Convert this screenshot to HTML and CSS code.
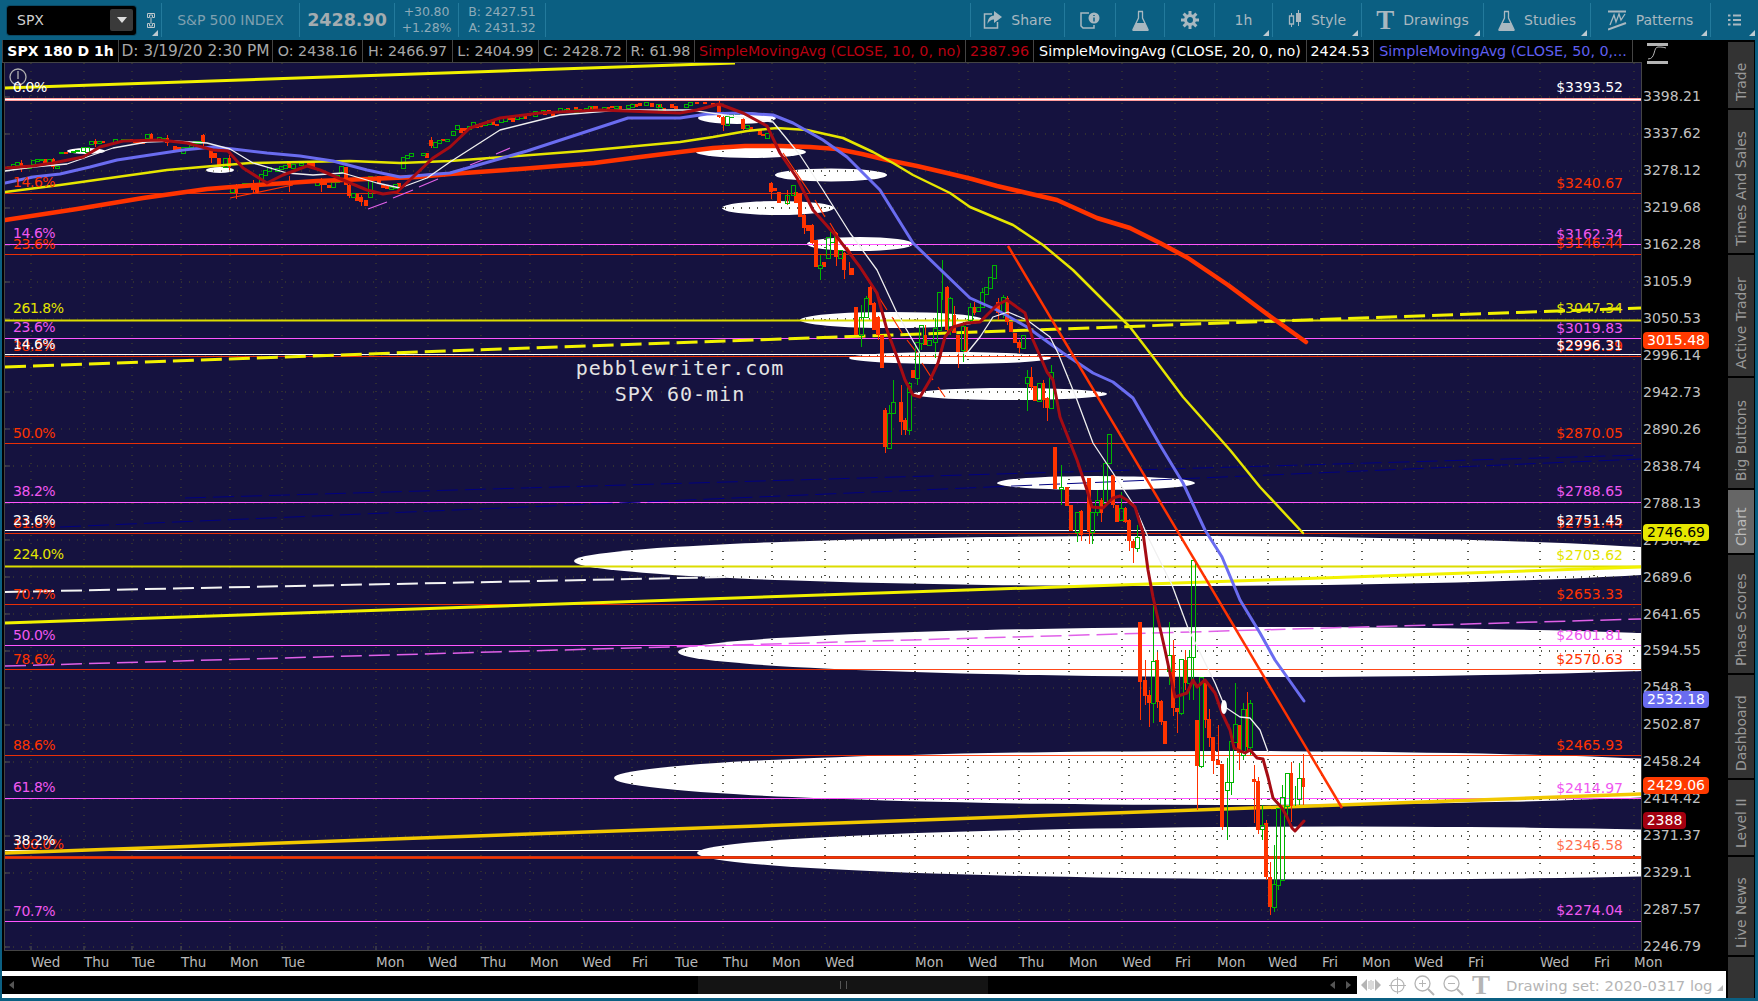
FILE: index.html
```html
<!DOCTYPE html>
<html lang="en">
<head>
<meta charset="utf-8">
<title>SPX chart</title>
<link rel="stylesheet" href="styles.css">
</head>
<body>
<div class="app">
  <header class="topbar">
    <div class="cell cell-symbol has-menu">
      <div class="symbol-box"><span class="symbol-name">SPX</span><span class="symbol-drop"><span class="drop-arrow"></span></span></div>
      <svg class="link-icon" width="10" height="17" viewBox="0 0 10 17"><path d="M1.5 1.5h7v4h-2v-2.500h-3v2.500h-2zM1.500 15.500h7v-4h-2v2.500h-3v-2.500h-2z" fill="none" stroke="#bcc6cb"/><path d="M5 5v7" stroke="#bcc6cb"/></svg>
    </div>
    <div class="cell dim">S&amp;P 500 INDEX</div>
    <div class="cell price">2428.90</div>
    <div class="cell stack dim"><span>+30.80</span><span>+1.28%</span></div>
    <div class="cell stack dim"><span>B: 2427.51</span><span>A: 2431.32</span></div>
    <div class="cell cell-empty"></div>
    <div class="cell tool"><svg width="19" height="18" viewBox="0 0 19 18"><path d="M9 3H1.500v14h13v-6" fill="none" stroke="#a9b8c0" stroke-width="1.500"/><path d="M11 0l8 6-8 6V8.500c-3 0-5 1.500-6.500 4.500 0-5 2.500-8 6.500-8.500z" fill="#a9b8c0"/></svg><span>Share</span></div>
    <div class="cell tool"><svg width="20" height="17" viewBox="0 0 20 17"><path d="M9 1H1v13l2 2h11v-3" fill="none" stroke="#a9b8c0" stroke-width="1.500"/><circle cx="14" cy="6" r="5.500" fill="#a9b8c0"/><path d="M14 3v1M14 5.500v4" stroke="#0b5f82" stroke-width="1.500"/></svg></div>
    <div class="cell tool"><svg width="17" height="21" viewBox="0 0 17 21"><path d="M6 1.500h5M6.500 1.500v6.500L1 19.500c-.3.800.2 1 1 1h13c.8 0 1.300-.2 1-1L10.500 8V1.500" fill="none" stroke="#a9b8c0" stroke-width="1.300"/><path d="M4 13h9l3 7H1z" fill="#a9b8c0"/></svg></div>
    <div class="cell tool"><svg width="18" height="18" viewBox="0 0 18 18"><circle cx="9" cy="9" r="4.500" fill="none" stroke="#a9b8c0" stroke-width="3"/><path d="M9 0v4M9 14v4M0 9h4M14 9h4M2.600 2.600l2.800 2.800M12.600 12.600l2.800 2.800M15.400 2.600l-2.800 2.800M5.400 12.600l-2.800 2.800" stroke="#a9b8c0" stroke-width="3"/></svg></div>
    <div class="cell tool has-menu"><span>1h</span></div>
    <div class="cell tool has-menu"><svg width="14" height="20" viewBox="0 0 14 20"><path d="M3.500 3v14M10.500 0v16" stroke="#a9b8c0"/><path d="M1.500 6h4v8h-4z" fill="#0b5f82" stroke="#a9b8c0" stroke-width="1.300"/><path d="M8 3h5v9H8z" fill="#a9b8c0"/></svg><span>Style</span></div>
    <div class="cell tool has-menu"><span class="t-glyph">T</span><span>Drawings</span></div>
    <div class="cell tool has-menu"><svg width="17" height="21" viewBox="0 0 17 21"><path d="M6 1.500h5M6.500 1.500v6.500L1 19.500c-.3.800.2 1 1 1h13c.8 0 1.300-.2 1-1L10.500 8V1.500" fill="none" stroke="#a9b8c0" stroke-width="1.300"/><path d="M4 13h9l3 7H1z" fill="#a9b8c0"/></svg><span>Studies</span></div>
    <div class="cell tool has-menu"><svg width="19" height="21" viewBox="0 0 19 21"><path d="M0 1.500h18M0 19.500L18 13" stroke="#a9b8c0" stroke-width="2"/><path d="M2 15L6 5l2 7 3-8 2 6 4-6" fill="none" stroke="#a9b8c0" stroke-width="1.300"/></svg><span>Patterns</span></div>
    <div class="cell tool has-menu"><svg width="13" height="12" viewBox="0 0 13 12"><path d="M0 1.500h2.500M0 6h2.500M0 10.500h2.500M5 1.500h8M5 6h8M5 10.500h8" stroke="#a9b8c0" stroke-width="2"/></svg></div>
  </header>

  <div class="workspace">
    <div class="chart-area">
      <div class="chart-top">
        <div class="legend">
          <span class="lg lg-title">SPX 180 D 1h</span>
          <span class="lg lg-date">D: 3/19/20 2:30 PM</span>
          <span class="lg">O: 2438.16</span>
          <span class="lg">H: 2466.97</span>
          <span class="lg">L: 2404.99</span>
          <span class="lg">C: 2428.72</span>
          <span class="lg">R: 61.98</span>
          <span class="lg c-red">SimpleMovingAvg (CLOSE, 10, 0, no)</span>
          <span class="lg c-red">2387.96</span>
          <span class="lg c-white">SimpleMovingAvg (CLOSE, 20, 0, no)</span>
          <span class="lg c-white">2424.53</span>
          <span class="lg c-blue">SimpleMovingAvg (CLOSE, 50, 0,...</span>
          <span class="lg"></span>
        </div>
        <div class="axis-head"><svg width="22" height="21" viewBox="0 0 22 21"><path d="M0 1.500h21M0 19.500h21" stroke="#b5b5b5" stroke-width="3"/><path d="M1 16c8 0 5-12 10-12 3 0 5 0 8 1" fill="none" stroke="#b5b5b5"/></svg></div>
      </div>

      <div class="plot-row">
        <div class="plot">
          <svg class="chart" width="1636" height="887" viewBox="5 63 1636 887">
            <defs>
              <clipPath id="ell">
                <ellipse cx="737" cy="118" rx="39" ry="6"/><ellipse cx="751" cy="152" rx="55" ry="6"/><ellipse cx="831" cy="175" rx="56" ry="6.500"/><ellipse cx="778" cy="208" rx="56" ry="7"/><ellipse cx="860" cy="244" rx="53" ry="7"/><ellipse cx="892" cy="320" rx="92" ry="8"/><ellipse cx="950" cy="358" rx="101" ry="6"/><ellipse cx="1010" cy="394" rx="97" ry="6"/><ellipse cx="1096" cy="483" rx="99" ry="7"/><ellipse cx="1157" cy="561" rx="583" ry="25"/><ellipse cx="1262" cy="652" rx="584" ry="25"/><ellipse cx="1222" cy="778" rx="608" ry="27"/><ellipse cx="1343" cy="853" rx="646" ry="26.500"/>
              </clipPath>
              <g id="gridlines">
                <path d="M5 97H1641M5 134H1641M5 171H1641M5 208H1641M5 245H1641M5 282H1641M5 319H1641M5 356H1641M5 392H1641M5 429H1641M5 466H1641M5 503H1641M5 540H1641M5 577H1641M5 614H1641M5 651H1641M5 688H1641M5 725H1641M5 762H1641M5 799H1641M5 836H1641M5 873H1641M5 910H1641M5 947H1641M31 63V950M84 63V950M132 63V950M181 63V950M230 63V950M282 63V950M376 63V950M428 63V950M481 63V950M530 63V950M582 63V950M632 63V950M675 63V950M723 63V950M772 63V950M825 63V950M915 63V950M968 63V950M1019 63V950M1069 63V950M1122 63V950M1175 63V950M1217 63V950M1268 63V950M1322 63V950M1362 63V950M1414 63V950M1468 63V950M1540 63V950M1594 63V950M1634 63V950"/>
              </g>
            </defs>
            <rect x="5" y="63" width="1636" height="887" class="bg"/>
            <g class="blobs">
              <ellipse cx="86" cy="151" rx="19" ry="3"/><ellipse cx="220" cy="170" rx="14" ry="3"/>
              <ellipse cx="737" cy="118" rx="39" ry="6"/><ellipse cx="751" cy="152" rx="55" ry="6"/><ellipse cx="831" cy="175" rx="56" ry="6.500"/><ellipse cx="778" cy="208" rx="56" ry="7"/><ellipse cx="860" cy="244" rx="53" ry="7"/><ellipse cx="892" cy="320" rx="92" ry="8"/><ellipse cx="950" cy="358" rx="101" ry="6"/><ellipse cx="1010" cy="394" rx="97" ry="6"/><ellipse cx="1096" cy="483" rx="99" ry="7"/><ellipse cx="1157" cy="561" rx="583" ry="25"/><ellipse cx="1262" cy="652" rx="584" ry="25"/><ellipse cx="1222" cy="778" rx="608" ry="27"/><ellipse cx="1343" cy="853" rx="646" ry="26.500"/>
            </g>
            <use href="#gridlines" class="grid"/>
            <g clip-path="url(#ell)"><use href="#gridlines" class="grid-on-white"/></g>
            <path class="ticks" d="M5 97h5M5 134h5M5 171h5M5 208h5M5 245h5M5 282h5M5 319h5M5 356h5M5 392h5M5 429h5M5 466h5M5 503h5M5 540h5M5 577h5M5 614h5M5 651h5M5 688h5M5 725h5M5 762h5M5 799h5M5 836h5M5 873h5M5 910h5M5 947h5M31 950v-4M84 950v-4M132 950v-4M181 950v-4M230 950v-4M282 950v-4M376 950v-4M428 950v-4M481 950v-4"/>

            <g class="levels">
              <path class="lv-pink" d="M5 99.500H1641"/><path class="lv-white" d="M5 99.500H1641"/>
              <path class="lv-red" d="M5 193.500H1641M5 254.500H1641M5 356.500H1641M5 443.500H1641M5 533.500H1641M5 604.500H1641M5 669.500H1641M5 755.500H1641"/>
              <path class="lv-mag" d="M5 244.500H1641M5 338.500H1641M5 502.500H1641M5 645.500H1641M5 798.500H1641M5 921.500H1641"/>
              <path class="lv-yel" d="M5 320.500H1641M5 566.500H1641"/>
              <path class="lv-white" d="M5 354.500H1641M5 530.500H1641M5 850.500H1641"/>
              <path class="lv-thick" d="M5 857.500H1641"/><path class="lv-red" d="M5 857.500H1641"/>
            </g>

            <g class="trend">
              <path class="t-yellow" d="M5 88L735 63"/>
              <path class="t-yellow-dash" d="M5 367L1641 308"/>
              <path class="t-white-dash" d="M5 592L730 577"/>
              <path class="t-yellow" d="M5 623L1641 567"/>
              <path class="t-mag-dash" d="M5 666L1641 619"/>
              <path class="t-navy-dash" d="M60 527L1641 459M185 498L1641 455"/>
              <path class="t-gold" d="M5 853L1641 794"/>
              <path class="t-red-thin" d="M230 198L293 185M783 153L810 193M815 200L825 217M830 223L840 240M847 247L887 310M892 317L902 333M907 340L917 353M922 363L933 380M938 387L945 397"/>
              <path class="t-mag-thin" d="M368 209L387 202M393 198L413 190M419 187L438 179M444 176L464 168M470 165L490 157M496 154L510 148"/>
            </g>

            <g class="candles">
              <path class="wick-r" d="M21 160V172M53 158V169M95 139V147M151 133V141M167 135V146M203 134V146M211 146V163M229 155V170M236 184V199M253 180V193M289 176V192M321 178V192M349 183V198M361 195V206M431 137V148M719 101V118M723 116V131M743 117V130M771 182V199M787 190V205M804 214V234M812 224V244M836 232V266M844 252V279M849 262V275M870 286V305M874 302V330M878 316V340M925 325V345M947 286V332M954 306V333M958 335V368M974 302V315M998 298V320M1007 296V325M1019 340V353M885 408V453M901 385V435M905 418V435M1031 367V390M1043 380V408M1047 397V421M1081 510V541M1089 478V544M1101 498V522M1113 474V508M1125 507V523M1129 519V551M1133 540V563M1140 622V720M1145 660V705M1149 690V727M1157 652V708M1161 700V725M1173 640V716M1177 708V733M1185 650V690M1197 720V810M1205 682V728M1209 709V747M1213 737V774M1218 725V765M1222 764V830M1239 725V770M1247 692V750M1254 765V823M1258 777V834M1266 820V880M1270 862V915M1291 762V822M1303 754V805"/>
              <path class="body-r" d="M21 163V167M25 165V169M45 159V163M53 159V167M62 152V154M66 152V154M95 141V144M103 141V143M131 139V142M135 141V143M139 142V144M143 142V144M151 134V139M155 139V140M167 138V143M175 146V150M179 147V152M203 135V143M211 149V158M215 153V158M219 158V167M229 158V167M236 186V193M253 183V190M257 185V192M289 163V168M309 162V167M313 162V169M321 181V185M325 181V185M329 185V188M346 167V185M349 185V196M357 194V201M361 197V202M366 200V206M379 176V183M383 185V188M387 186V189M399 183V188M427 153V158M431 140V146M443 139V141M461 128V133M465 128V131M477 124V128M481 123V127M493 121V125M497 124V126M509 117V120M513 118V122M525 116V119M529 113V116M545 111V115M549 110V113M553 112V116M568 108V112M576 107V110M580 109V112M592 106V109M596 106V110M608 107V110M612 106V108M620 106V109M636 104V107M640 103V106M652 103V107M660 104V108M664 108V112M672 104V108M676 106V109M697 102V104M705 102V104M713 103V106M719 103V117M723 117V125M743 119V129M751 127V130M760 130V135M763 134V136M771 183V192M775 188V191M779 192V203M796 192V203M800 193V217M804 215V228M808 225V231M812 225V243M816 240V267M824 262V267M836 233V257M844 253V270M852 268V275M856 307V335M870 287V305M874 303V330M878 317V335M882 335V368M913 370V378M925 335V345M947 287V330M954 315V333M958 335V352M966 327V352M974 307V313M998 302V313M1007 298V322M1011 322V332M1015 333V343M1019 342V348M885 410V447M901 402V422M905 420V430M1031 377V387M1035 386V401M1043 383V400M1047 398V408M1055 447V489M1067 487V506M1071 505V531M1081 511V535M1089 478V532M1101 500V513M1113 475V505M1117 505V522M1125 508V522M1129 520V541M1133 541V548M1140 622V682M1145 680V696M1149 695V703M1157 660V702M1161 701V722M1165 721V744M1173 655V708M1177 708V712M1185 660V683M1197 720V766M1205 682V720M1209 719V738M1213 737V761M1218 760V765M1222 764V827M1239 725V753M1247 709V747M1254 779V782M1258 781V830M1266 823V877M1270 877V907M1291 773V806M1303 778V787"/>
              <path class="wick-g" d="M727 112V116M820 255V265M820 268V280M861 305V317M861 335V347M866 296V298M917 378V385M921 343V350M935 318V328M935 342V358M942 260V300M950 297V298M950 330V335M963 322V326M963 350V362M970 303V307M970 320V322M982 288V292M1003 295V297M1003 313V318M1027 370V377M1027 383V411M1051 365V372M893 380V402M889 405V413M909 382V383M909 430V435M1061 465V487M1061 489V505M1077 532V542M1092 532V544M1097 490V500M1097 512V516M1105 462V463M1105 503V505M1121 492V508M1137 525V537M1137 548V552M1153 598V661M1153 703V723M1169 622V655M1169 671V685M1181 713V715M1189 650V657M1189 683V700M1193 657V700M1201 766V768M1227 758V782M1227 790V840M1231 735V741M1231 782V795M1235 683V724M1243 703V709M1243 755V760M1250 700V703M1250 747V755M1262 805V825M1262 829V840M1274 845V884M1274 907V912M1278 885V890M1282 785V797M1287 806V820M1295 786V806M1299 763V778M1299 799V805"/>
              <path class="body-g" d="M7 166h4v2h-4zM11 164h4v2h-4zM15 162h4v3h-4zM27 167h4v1h-4zM31 160h4v4h-4zM35 159h4v2h-4zM39 159h4v1h-4zM47 159h4v3h-4zM55 166h4v2h-4zM59 152h4v1h-4zM71 151h4v1h-4zM75 150h4v1h-4zM81 147h4v4h-4zM85 147h4v5h-4zM89 141h4v3h-4zM97 141h4v2h-4zM113 139h4v3h-4zM121 139h4v2h-4zM125 139h4v1h-4zM145 134h4v4h-4zM157 137h4v3h-4zM161 138h4v2h-4zM181 147h4v6h-4zM185 147h4v2h-4zM189 145h4v2h-4zM193 141h4v2h-4zM197 141h4v2h-4zM223 158h4v9h-4zM230 186h4v6h-4zM238 184h4v3h-4zM242 183h4v4h-4zM246 183h4v2h-4zM259 174h4v10h-4zM263 170h4v5h-4zM267 167h4v4h-4zM275 168h4v3h-4zM279 166h4v3h-4zM283 165h4v3h-4zM291 164h4v4h-4zM299 163h4v2h-4zM315 180h4v5h-4zM331 182h4v5h-4zM335 175h4v7h-4zM339 166h4v6h-4zM351 193h4v4h-4zM368 176h4v21h-4zM389 187h4v2h-4zM393 184h4v4h-4zM401 157h4v11h-4zM405 155h4v3h-4zM409 153h4v3h-4zM421 153h4v2h-4zM433 142h4v5h-4zM437 140h4v3h-4zM445 139h4v2h-4zM451 131h4v4h-4zM455 125h4v4h-4zM467 126h4v3h-4zM471 122h4v4h-4zM483 122h4v3h-4zM487 120h4v4h-4zM499 118h4v4h-4zM503 117h4v4h-4zM515 115h4v4h-4zM519 114h4v4h-4zM533 111h4v5h-4zM541 110h4v3h-4zM558 108h4v4h-4zM564 109h4v3h-4zM574 109h4v3h-4zM584 108h4v3h-4zM588 106h4v3h-4zM602 107h4v3h-4zM614 106h4v2h-4zM626 105h4v3h-4zM630 104h4v3h-4zM644 102h4v3h-4zM656 104h4v3h-4zM658 107h4v3h-4zM684 104h4v3h-4zM688 102h4v3h-4zM725 116h4v9h-4zM729 114h4v3h-4zM735 112h4v2h-4zM745 125h4v3h-4zM765 133h4v5h-4zM785 195h4v8h-4zM791 185h4v10h-4zM818 265h4v3h-4zM826 237h4v21h-4zM830 232h4v10h-4zM838 250h4v8h-4zM859 317h4v18h-4zM864 298h4v19h-4zM907 386h4v6h-4zM915 342h4v36h-4zM919 325h4v18h-4zM927 340h4v5h-4zM933 328h4v14h-4zM937 292h4v38h-4zM948 298h4v32h-4zM961 326h4v24h-4zM968 307h4v13h-4zM976 307h4v4h-4zM980 292h4v15h-4zM984 287h4v7h-4zM988 277h4v11h-4zM992 265h4v13h-4zM1001 297h4v16h-4zM1021 335h4v13h-4zM887 413h4v35h-4zM891 402h4v11h-4zM907 383h4v47h-4zM1025 377h4v6h-4zM1037 383h4v18h-4zM1049 372h4v36h-4zM1059 487h4v2h-4zM1075 512h4v20h-4zM1090 512h4v20h-4zM1095 500h4v12h-4zM1103 463h4v40h-4zM1107 434h4v29h-4zM1119 508h4v12h-4zM1135 537h4v11h-4zM1151 661h4v42h-4zM1167 655h4v16h-4zM1179 659h4v54h-4zM1187 657h4v26h-4zM1191 560h4v97h-4zM1199 677h4v89h-4zM1225 782h4v8h-4zM1229 741h4v41h-4zM1233 724h4v18h-4zM1241 709h4v46h-4zM1248 703h4v44h-4zM1260 825h4v4h-4zM1272 884h4v23h-4zM1276 808h4v77h-4zM1280 797h4v83h-4zM1285 773h4v33h-4zM1297 778h4v21h-4z"/>
            </g>

            <g class="mas">
              <polyline class="ma-red" points="5,220 77,209 143,198 207,189 257,185 317,181 367,179 417,177 450,174 520,169 594,163 640,157 680,152 713,148 745,146 780,146 810,147 837,149 862,154 887,160 917,166 947,173 972,179 997,186 1027,193 1057,200 1077,209 1097,218 1130,228 1160,243 1188,258 1228,285 1267,314 1306,342"/>
              <polyline class="ma-yellow" points="5,192 60,185 117,177 167,170 213,166 250,163 300,162 350,161 400,163 450,161 583,151 680,142 713,137 747,131 777,128 807,130 843,138 873,152 893,163 913,175 950,193 970,207 1013,225 1043,245 1073,270 1103,300 1130,327 1153,357 1183,397 1230,450 1260,487 1303,533"/>
              <polyline class="ma-blue" points="5,183 33,177 60,174 90,167 117,160 150,155 183,150 213,147 233,149 267,153 300,156 333,161 367,170 400,177 450,173 527,151 628,118 680,118 707,114 740,113 773,115 793,123 823,140 847,157 880,190 913,243 943,272 970,298 997,310 1027,327 1063,353 1093,373 1113,382 1133,398 1160,445 1183,483 1205,530 1222,557 1240,600 1260,633 1275,660 1304,701"/>
              <polyline class="ma-white" points="5,171 33,167 67,164 87,157 113,148 147,142 173,141 207,143 230,149 253,163 287,173 313,175 343,173 360,178 377,183 400,188 427,178 450,162 500,130 560,115 620,110 690,110 773,122 800,155 823,190 850,233 877,270 897,313 920,353 967,353 980,337 993,317 1008,312 1027,320 1050,337 1058,353 1077,400 1093,443 1113,473 1135,507 1148,537 1172,585 1188,628 1215,683 1225,707 1240,717 1250,718 1260,730 1268,752"/>
              <polyline class="ma-dark" points="5,168 33,166 53,163 83,157 100,147 123,141 160,140 187,143 213,150 228,151 243,168 267,183 283,175 307,166 320,170 350,183 367,190 383,194 397,192 413,177 433,158 450,147 470,128 500,118 540,113 600,110 680,113 697,110 719,104 743,113 767,126 780,153 797,178 813,210 837,237 860,267 877,293 887,330 897,357 905,380 913,395 920,397 930,380 938,363 945,337 953,327 967,323 980,322 997,305 1007,300 1025,313 1033,340 1047,372 1053,380 1060,417 1077,460 1087,490 1092,507 1103,508 1113,498 1120,496 1127,500 1135,507 1143,533 1148,570 1153,597 1165,650 1175,697 1187,693 1193,680 1197,687 1205,680 1215,693 1222,713 1230,730 1234,748 1245,753 1250,750 1257,758 1263,759 1268,777 1273,798 1282,808 1287,817 1292,828 1295,831 1304,821"/>
              <ellipse class="blob-dot" cx="1224" cy="707" rx="3" ry="7"/>
              <path class="t-red" d="M1008 246L1342 808"/>
            </g>

            <g class="info-mark"><circle cx="18" cy="77" r="8"/><path d="M18 71v8M18 81v2"/></g>

            <g class="lb-left">
              <text class="c-wh" x="13" y="92">0.0%</text>
              <text class="c-rd" x="13" y="187">14.6%</text>
              <text class="c-mg" x="13" y="238">14.6%</text>
              <text class="c-rd" x="13" y="249">23.6%</text>
              <text class="c-yl" x="13" y="313">261.8%</text>
              <text class="c-mg" x="13" y="332">23.6%</text>
              <text class="c-rd" x="13" y="351">38.2%</text>
              <text class="c-wh" x="13" y="349">14.6%</text>
              <text class="c-rd" x="13" y="438">50.0%</text>
              <text class="c-mg" x="13" y="496">38.2%</text>
              <text class="c-rd" x="13" y="528">61.8%</text>
              <text class="c-wh" x="13" y="525">23.6%</text>
              <text class="c-yl" x="13" y="559">224.0%</text>
              <text class="c-rd" x="13" y="599">70.7%</text>
              <text class="c-mg" x="13" y="640">50.0%</text>
              <text class="c-rd" x="13" y="664">78.6%</text>
              <text class="c-rd" x="13" y="750">88.6%</text>
              <text class="c-mg" x="13" y="792">61.8%</text>
              <text class="c-rd" x="13" y="849">100.0%</text>
              <text class="c-wh" x="13" y="845">38.2%</text>
              <text class="c-mg" x="13" y="916">70.7%</text>
            </g>
            <g class="lb-right">
              <text class="c-wh" x="1623" y="92">$3393.52</text>
              <text class="c-rd" x="1623" y="188">$3240.67</text>
              <text class="c-mg" x="1623" y="239">$3162.34</text>
              <text class="c-rd" x="1623" y="248">$3146.44</text>
              <text class="c-yl" x="1623" y="313">$3047.34</text>
              <text class="c-mg" x="1623" y="333">$3019.83</text>
              <text class="c-rd" x="1623" y="351">$2996.39</text>
              <text class="c-wh" x="1623" y="350">$2996.31</text>
              <text class="c-rd" x="1623" y="438">$2870.05</text>
              <text class="c-mg" x="1623" y="496">$2788.65</text>
              <text class="c-rd" x="1623" y="528">$2751.44</text>
              <text class="c-wh" x="1623" y="525">$2751.45</text>
              <text class="c-yl" x="1623" y="560">$2703.62</text>
              <text class="c-rd" x="1623" y="599">$2653.33</text>
              <text class="c-mg" x="1623" y="640">$2601.81</text>
              <text class="c-rd" x="1623" y="664">$2570.63</text>
              <text class="c-rd" x="1623" y="750">$2465.93</text>
              <text class="c-mg" x="1623" y="793">$2414.97</text>
              <text class="c-rd faint" x="1623" y="850">$2346.58</text>
              <text class="c-mg" x="1623" y="915">$2274.04</text>
            </g>
            <text class="note" x="680" y="375">pebblewriter.com</text>
            <text class="note" x="680" y="401">SPX 60-min</text>
          </svg>
        </div>
        <div class="price-axis">
          <span>3398.21</span><span>3337.62</span><span>3278.12</span><span>3219.68</span><span>3162.28</span><span>3105.9</span><span>3050.53</span><span>2996.14</span><span>2942.73</span><span>2890.26</span><span>2838.74</span><span>2788.13</span><span>2738.42</span><span>2689.6</span><span>2641.65</span><span>2594.55</span><span>2548.3</span><span>2502.87</span><span>2458.24</span><span>2414.42</span><span>2371.37</span><span>2329.1</span><span>2287.57</span><span>2246.79</span>
          <b class="badge b-red b-3015">3015.48</b>
          <b class="badge b-yellow b-2746">2746.69</b>
          <b class="badge b-blue b-2532">2532.18</b>
          <b class="badge b-red b-2429">2429.06</b>
          <b class="badge b-dark b-2388">2388</b>
        </div>
      </div>

      <svg class="time-axis" width="1724" height="20" viewBox="2 951 1724 20">
        <text x="31" y="967">Wed</text><text x="84" y="967">Thu</text><text x="132" y="967">Tue</text><text x="181" y="967">Thu</text><text x="230" y="967">Mon</text><text x="282" y="967">Tue</text><text x="376" y="967">Mon</text><text x="428" y="967">Wed</text><text x="481" y="967">Thu</text><text x="530" y="967">Mon</text><text x="582" y="967">Wed</text><text x="632" y="967">Fri</text><text x="675" y="967">Tue</text><text x="723" y="967">Thu</text><text x="772" y="967">Mon</text><text x="825" y="967">Wed</text><text x="915" y="967">Mon</text><text x="968" y="967">Wed</text><text x="1019" y="967">Thu</text><text x="1069" y="967">Mon</text><text x="1122" y="967">Wed</text><text x="1175" y="967">Fri</text><text x="1217" y="967">Mon</text><text x="1268" y="967">Wed</text><text x="1322" y="967">Fri</text><text x="1362" y="967">Mon</text><text x="1414" y="967">Wed</text><text x="1468" y="967">Fri</text><text x="1540" y="967">Wed</text><text x="1594" y="967">Fri</text><text x="1634" y="967">Mon</text>
      </svg>

      <div class="scroll-row">
        <div class="scrollbar">
          <span class="arrow-l"></span>
          <div class="thumb"><span class="grip"></span></div>
          <span class="arrow-l dim-arrow"></span>
          <span class="arrow-r"></span>
        </div>
        <div class="scroll-tools">
          <svg width="20" height="14" viewBox="0 0 20 14"><path d="M6 1L0 7l6 6zM14 1l6 6-6 6z" fill="#b5b5b5"/><path d="M8 3v8M10 2v10M12 3v8" stroke="#b5b5b5"/></svg>
          <svg width="17" height="17" viewBox="0 0 17 17"><circle cx="8.500" cy="8.500" r="6.500" fill="none" stroke="#b5b5b5" stroke-width="1.200"/><path d="M0 8.500h17M8.500 0v17" stroke="#b5b5b5"/></svg>
          <svg width="21" height="21" viewBox="0 0 21 21"><circle cx="8.500" cy="8.500" r="7.500" fill="none" stroke="#b5b5b5" stroke-width="1.300"/><path d="M5 8.500h7M8.500 5v7" stroke="#b5b5b5"/><path d="M14 14l6 6" stroke="#b5b5b5" stroke-width="2"/></svg>
          <svg width="21" height="21" viewBox="0 0 21 21"><circle cx="8.500" cy="8.500" r="7.500" fill="none" stroke="#b5b5b5" stroke-width="1.300"/><path d="M5 8.500h7" stroke="#b5b5b5"/><path d="M14 14l6 6" stroke="#b5b5b5" stroke-width="2"/></svg>
          <span class="t-glyph t-gray">T</span>
          <span class="drawing-set">Drawing set: 2020-0317 log</span>
        </div>
      </div>
    </div>

    <nav class="tabs">
      <a>Trade</a><a>Times And Sales</a><a>Active Trader</a><a>Big Buttons</a><a class="on">Chart</a><a>Phase Scores</a><a>Dashboard</a><a>Level II</a><a>Live News</a><a></a>
    </nav>
  </div>
</div>
</body>
</html>
```

FILE: styles.css
```css
* { box-sizing: border-box; }
html, body { margin: 0; padding: 0; background: #0b5f82; overflow: hidden; }
body { font-family: "DejaVu Sans", "Liberation Sans", sans-serif; }
.app { width: 1758px; height: 1001px; display: flex; flex-direction: column; background: #0b5f82; }

.topbar {
  height: 40px; flex: none; display: grid; background: #0b5f82; padding-top: 3px;
  grid-template-columns: 161px 138px 95px 64px 87px 425px 94px 51px 49px 50px 58px 89px 122px 107px 120px 48px;
  color: #a9b8c0; font-size: 14px;
}
.cell { display: flex; align-items: center; justify-content: center; gap: 9px; border-left: 1px solid #237a9c; position: relative; white-space: nowrap; margin-bottom: 3px; }
.cell:first-child { border-left: 0; justify-content: flex-start; padding-left: 7px; gap: 10px; }
.cell-empty { border-left: 1px solid #237a9c; }
.has-menu::after { content: ""; position: absolute; right: 3px; bottom: 1px; border: 3px solid transparent; border-right-color: #bccad1; border-bottom-color: #bccad1; }
.symbol-box { width: 129px; height: 29px; background: #000; border-radius: 3px; display: flex; align-items: center; justify-content: space-between; padding: 0 3px 0 10px; color: #d0d0d0; box-shadow: 0 0 0 1px #0a4a66; }
.symbol-drop { width: 23px; height: 22px; background: #3a3a3a; border-radius: 2px; display: flex; align-items: center; justify-content: center; }
.drop-arrow { width: 0; height: 0; border: 5px solid transparent; border-top: 6px solid #ddd; border-bottom: 0; }
.dim { font-size: 14px; color: #7fa0b0; letter-spacing: -.1px; }
.price { font-size: 17.500px; font-weight: 700; color: #a3acb0; }
.stack { flex-direction: column; gap: 2px; font-size: 12.500px; color: #8eabb9; line-height: 14px; }
.tool { gap: 9px; }
.t-glyph { font-family: "Liberation Serif", serif; font-weight: 700; font-size: 27px; line-height: 20px; color: #a9b8c0; }

.workspace { flex: 1; display: flex; padding: 0 3px 3px 2px; min-height: 0; }
.chart-area { width: 1724px; flex: none; background: #000; display: flex; flex-direction: column; }
.chart-top { height: 23px; display: flex; }
.legend { width: 1640px; flex: none; display: grid; grid-template-columns: 116px 154px 90px 90px 86px 88px 68px 271px 68px 273px 67px 259px 10px; background: #000; border-bottom: 1px solid #444; border-left: 1px solid #444; color: #a8a8a8; font-size: 14.300px; }
.lg { display: flex; align-items: center; justify-content: center; border-right: 1px solid #444; white-space: nowrap; overflow: hidden; }
.lg:last-child { border-right: 0; }
.lg-title { font-weight: 700; color: #fff; font-size: 14px; }
.lg-date { font-size: 15.400px; }
.c-red { color: #b80012; }
.c-white { color: #fff; }
.c-blue { color: #5f5ff0; }
.axis-head { flex: 1; padding: 3px 0 0 5px; background: #000; position: relative; z-index: 1; height: 24px; }
.axis-head svg { display: block; }

.plot-row { display: flex; height: 888px; }
.plot { flex: none; margin-left: 2px; width: 1638px; border: 1px solid #444; border-width: 0 1px 1px 1px; overflow: hidden; }
.chart { display: block; }
.bg { fill: #15123f; }
.blobs ellipse, .blob-dot { fill: #fff; }
.grid { fill: none; stroke: #4d4d28; stroke-dasharray: 1 7; }
.grid-on-white { fill: none; stroke: #000; stroke-dasharray: 1 7; }
.ticks { stroke: #555; fill: none; }
.levels path { fill: none; }
.lv-red { stroke: #ff3300; stroke-opacity: .9; }
.lv-mag { stroke: #ff55ff; }
.lv-yel { stroke: #dcdc00; stroke-width: 2; }
.lv-white { stroke: #fff; }
.lv-pink { stroke: #ff9c9c; stroke-width: 3; }
.lv-thick { stroke: #d0340f; stroke-width: 3; }
.trend path { fill: none; }
.t-yellow { stroke: #f2f200; stroke-width: 3; }
.t-yellow-dash { stroke: #f2f200; stroke-width: 3; stroke-dasharray: 21 7; }
.t-white-dash { stroke: #f4f4f4; stroke-width: 2; stroke-dasharray: 21 7; }
.t-mag-dash { stroke: #e060e8; stroke-width: 1.500; stroke-dasharray: 21 7; }
.t-navy-dash { stroke: #000080; stroke-width: 1; stroke-dasharray: 21 7; }
.t-gold { stroke: #f2c800; stroke-width: 3.500; }
.t-red-thin { stroke: #ff3300; stroke-width: 1.200; }
.t-mag-thin { stroke: #e060e8; stroke-width: 1.200; }
.t-red { stroke: #ff3300; stroke-width: 2.500; fill: none; }
.candles path { fill: none; shape-rendering: crispEdges; }
.wick-r { stroke: #ff3300; }
.body-r { stroke: #ff3300; stroke-width: 4; }
.wick-g { stroke: #00b400; }
.body-g { stroke: #00b400; }
.mas polyline { fill: none; stroke-linejoin: round; stroke-linecap: round; }
.ma-red { stroke: #ff3300; stroke-width: 4.500; }
.ma-yellow { stroke: #e6e600; stroke-width: 2.500; }
.ma-blue { stroke: #6a6cf0; stroke-width: 3; }
.ma-white { stroke: #f0f0f0; stroke-width: 1.300; }
.ma-dark { stroke: #a50c14; stroke-width: 3; }
.info-mark circle, .info-mark path { fill: none; stroke: #b0b0b0; stroke-width: 1.300; }
.lb-left text { font-size: 14px; letter-spacing: -.45px; }
.lb-right text { text-anchor: end; font-size: 14px; }
.faint { opacity: .7; }
.c-wh { fill: #fff; }
.c-rd { fill: #ff3300; }
.c-mg { fill: #f058f0; }
.c-yl { fill: #e4e400; }
.note { font-family: "DejaVu Sans Mono", "Liberation Mono", monospace; font-size: 20px; letter-spacing: 1px; fill: #e4e4e4; text-anchor: middle; }

.price-axis { flex: 1; position: relative; background: #000; overflow: hidden; padding-top: 15.200px; display: flex; flex-direction: column; padding-left: 1px; color: #c0c0c0; font-size: 14px; }
.price-axis span { height: 36.960px; line-height: 36.960px; flex: none; }
.badge { position: absolute; left: 1px; width: 66px; height: 17px; line-height: 17px; border-radius: 4px; text-align: center; font-size: 14px; font-weight: 400; color: #fff; }
.b-red { background: #ff3a00; }
.b-yellow { background: #e6e600; color: #000; }
.b-blue { background: #6a6cf0; }
.b-dark { background: #a30010; width: 43px; }
.b-3015 { top: 269px; }
.b-2746 { top: 461px; }
.b-2532 { top: 628px; }
.b-2429 { top: 714px; }
.b-2388 { top: 749px; }

.time-axis { display: block; background: #000; flex: none; }
.time-axis text { font-size: 13.500px; fill: #b8b8b8; }

.scroll-row { height: 27px; flex: none; background: #fff; padding: 5px 0 4px; display: flex; }
.scrollbar { width: 1355px; flex: none; background: #000; display: flex; align-items: center; padding-left: 7px; }
.arrow-l, .arrow-r { width: 0; height: 0; border: 4px solid transparent; flex: none; }
.arrow-l { border-right: 5px solid #555; border-left: 0; }
.arrow-r { border-left: 5px solid #555; border-right: 0; margin-left: 11px; }
.thumb { width: 290px; height: 100%; margin: 0 342px 0 684px; background: #141414; display: flex; align-items: center; justify-content: center; flex: none; }
.grip { width: 7px; height: 8px; border-left: 1px solid #555; border-right: 1px solid #555; }
.scroll-tools { flex: 1; display: flex; align-items: center; padding-left: 4px; gap: 8px; position: relative; }
.t-gray { color: #b5b5b5; }
.drawing-set { margin-left: 8px; font-size: 14.800px; color: #b5b5b5; white-space: nowrap; }
.scroll-tools::after { content: ""; position: absolute; right: 3px; bottom: 3px; border: 3px solid transparent; border-right-color: #bbb; border-bottom-color: #bbb; }

.tabs { flex: 1; background: #000; padding: 2px 1px 0 2px; display: grid; grid-template-rows: 66px 143px 121px 110px 63px 118px 103px 75px 98px 1fr; row-gap: 2px; }
.tabs a { background: #333; color: #999; font-size: 14px; writing-mode: vertical-rl; transform: rotate(180deg); display: flex; align-items: center; padding-top: 7px; white-space: nowrap; overflow: hidden; }
.tabs a.on { background: #666; color: #bbb; }
```
